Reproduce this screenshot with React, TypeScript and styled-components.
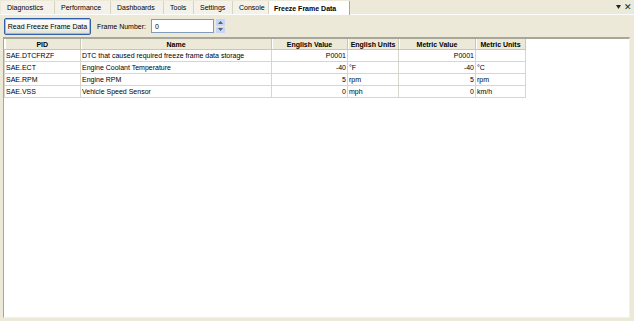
import styled, { createGlobalStyle } from "styled-components";

const GlobalStyle = createGlobalStyle`
  html, body {
    margin: 0;
    padding: 0;
    background: #ece9d8;
  }
  body {
    font-family: "Liberation Sans", Arial, sans-serif;
    font-size: 7px;
    color: #000;
  }
`;

interface Row {
  pid: string;
  name: string;
  englishValue: string;
  englishUnits: string;
  metricValue: string;
  metricUnits: string;
}

const tabs = [
  { label: "Diagnostics", width: 54 },
  { label: "Performance", width: 56 },
  { label: "Dashboards", width: 53 },
  { label: "Tools", width: 30 },
  { label: "Settings", width: 39 },
  { label: "Console", width: 36 },
  { label: "Freeze Frame Data", width: 81 },
];

const columns = [
  { title: "PID", width: 76 },
  { title: "Name", width: 191 },
  { title: "English Value", width: 76 },
  { title: "English Units", width: 51 },
  { title: "Metric Value", width: 77 },
  { title: "Metric Units", width: 50 },
];

const rows: Row[] = [
  {
    pid: "SAE.DTCFRZF",
    name: "DTC that caused required freeze frame data storage",
    englishValue: "P0001",
    englishUnits: "",
    metricValue: "P0001",
    metricUnits: "",
  },
  {
    pid: "SAE.ECT",
    name: "Engine Coolant Temperature",
    englishValue: "-40",
    englishUnits: "°F",
    metricValue: "-40",
    metricUnits: "°C",
  },
  {
    pid: "SAE.RPM",
    name: "Engine RPM",
    englishValue: "5",
    englishUnits: "rpm",
    metricValue: "5",
    metricUnits: "rpm",
  },
  {
    pid: "SAE.VSS",
    name: "Vehicle Speed Sensor",
    englishValue: "0",
    englishUnits: "mph",
    metricValue: "0",
    metricUnits: "km/h",
  },
];

const Window = styled.div`
  width: 634px;
  height: 321px;
  display: flex;
  flex-direction: column;
  background: #ece9d8;
  overflow: hidden;
`;

const TabStrip = styled.div`
  height: 14px;
  display: flex;
  align-items: flex-end;
  padding-left: 1px;
  border-bottom: 1px solid #fcfcfa;
`;

const Tab = styled.div<{ $active?: boolean; $w: number }>`
  width: ${(p) => p.$w}px;
  height: ${(p) => (p.$active ? 14 : 13)}px;
  box-sizing: border-box;
  padding-left: ${(p) => (p.$active ? 5 : 6)}px;
  display: flex;
  align-items: center;
  border-right: 1px solid ${(p) => (p.$active ? "#aca899" : "#d8d4c4")};
  background: ${(p) => (p.$active ? "#ffffff" : "#f3f1e8")};
  font-weight: ${(p) => (p.$active ? "bold" : "normal")};
  white-space: nowrap;
  margin-bottom: ${(p) => (p.$active ? -1 : 0)}px;
`;

const StripButtons = styled.div`
  margin-left: auto;
  display: flex;
  align-items: center;
  gap: 3px;
  height: 14px;
  padding-right: 2px;
  font-size: 9px;
  color: #222;
`;

const Toolbar = styled.div`
  height: 22px;
  display: flex;
  align-items: center;
  padding-left: 4px;
`;

const Button = styled.button`
  width: 87px;
  height: 17px;
  padding: 0;
  font: inherit;
  color: #000;
  white-space: nowrap;
  border: 1px solid #2f5fa6;
  border-radius: 2px;
  background: linear-gradient(#ffffff, #f0efe8 70%, #dcdad0);
  box-shadow: inset 0 0 0 1px #9dbbe8;
`;

const Label = styled.span`
  margin-left: 6px;
  white-space: nowrap;
`;

const NumberInput = styled.div`
  margin-left: 5px;
  width: 63px;
  height: 14px;
  box-sizing: border-box;
  border: 1px solid #7f9db9;
  background: #fff;
  padding-left: 3px;
  display: flex;
  align-items: center;
`;

const Spinner = styled.div`
  margin-left: 2px;
  width: 9px;
  height: 14px;
  display: flex;
  flex-direction: column;
  gap: 1px;
`;

const SpinHalf = styled.div`
  flex: 1;
  background: #c6d5f8;
  border-radius: 1px;
  display: flex;
  align-items: center;
  justify-content: center;
`;

const GridPanel = styled.div`
  flex: 1;
  margin: 0 4px 3px 3px;
  background: #fff;
  border-top: 2px solid #a7a699;
  border-left: 1px solid #a7a699;
  border-right: 1px solid #f2f1ea;
  border-bottom: 1px solid #f2f1ea;
`;

const Table = styled.table`
  width: 521px;
  border-collapse: collapse;
  table-layout: fixed;
`;

const HeaderCell = styled.th`
  height: 10px;
  padding: 0;
  background: #ece9d8;
  font-weight: bold;
  text-align: center;
  white-space: nowrap;
  overflow: hidden;
  border-right: 1px solid #c9c6b6;
  border-bottom: 1px solid #c9c6b6;
  box-shadow: inset 1px 0 0 #fff;
`;

const Cell = styled.td<{ $right?: boolean }>`
  height: 11px;
  padding: 0 1px;
  border: 1px solid #d8d6cc;
  text-align: ${(p) => (p.$right ? "right" : "left")};
  white-space: nowrap;
  overflow: hidden;
`;

const Arrow = ({ up }: { up?: boolean }) => (
  <svg width="5" height="3" viewBox="0 0 5 3">
    <path d={up ? "M0 3 L2.5 0 L5 3 Z" : "M0 0 L2.5 3 L5 0 Z"} fill="#4d6185" />
  </svg>
);

export default function App() {
  return (
    <Window>
      <GlobalStyle />
      <TabStrip>
        {tabs.map((t, i) => (
          <Tab key={t.label} $w={t.width} $active={i === tabs.length - 1}>
            {t.label}
          </Tab>
        ))}
        <StripButtons>
          <svg width="5" height="4" viewBox="0 0 5 4">
            <path d="M0 0 L5 0 L2.5 4 Z" fill="#222" />
          </svg>
          <span>✕</span>
        </StripButtons>
      </TabStrip>
      <Toolbar>
        <Button>Read Freeze Frame Data</Button>
        <Label>Frame Number:</Label>
        <NumberInput>0</NumberInput>
        <Spinner>
          <SpinHalf>
            <Arrow up />
          </SpinHalf>
          <SpinHalf>
            <Arrow />
          </SpinHalf>
        </Spinner>
      </Toolbar>
      <GridPanel>
        <Table>
          <colgroup>
            {columns.map((c) => (
              <col key={c.title} style={{ width: c.width }} />
            ))}
          </colgroup>
          <thead>
            <tr>
              {columns.map((c) => (
                <HeaderCell key={c.title}>{c.title}</HeaderCell>
              ))}
            </tr>
          </thead>
          <tbody>
            {rows.map((r) => (
              <tr key={r.pid}>
                <Cell>{r.pid}</Cell>
                <Cell>{r.name}</Cell>
                <Cell $right>{r.englishValue}</Cell>
                <Cell>{r.englishUnits}</Cell>
                <Cell $right>{r.metricValue}</Cell>
                <Cell>{r.metricUnits}</Cell>
              </tr>
            ))}
          </tbody>
        </Table>
      </GridPanel>
    </Window>
  );
}
